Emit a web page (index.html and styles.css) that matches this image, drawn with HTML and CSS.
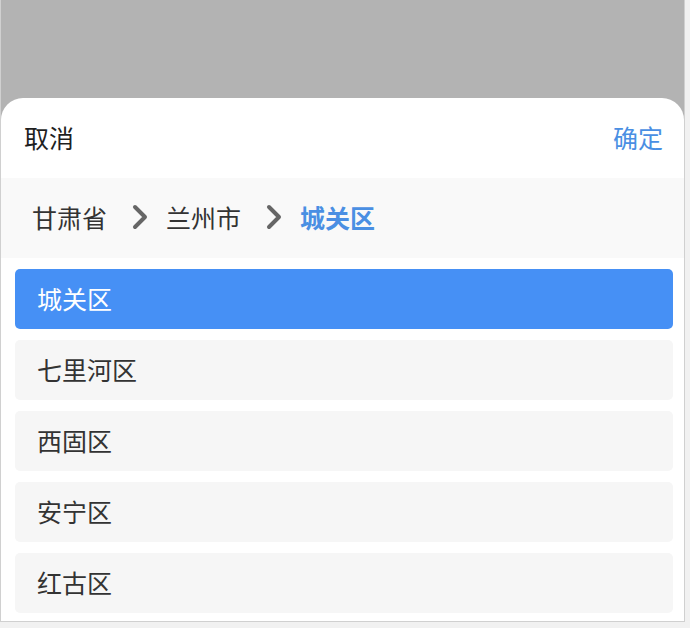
FILE: index.html
```html
<!DOCTYPE html>
<html>
<head>
  <title>地区选择</title>
  <meta name="viewport" content="width=device-width, initial-scale=1.0">
  <link rel="stylesheet" href="styles.css">
</head>
<body>
  <div class="frame">
    <div class="mask"></div>
    <div class="sheet">
      <div class="sheet-header">
        <span class="cancel">取消</span>
        <span class="confirm">确定</span>
      </div>

      <div class="crumbs">
        <span class="crumb">甘肃省</span>
        <svg class="arrow" width="16" height="26" viewBox="0 0 16 26"><path d="M3 3 L13 13 L3 23" /></svg>
        <span class="crumb">兰州市</span>
        <svg class="arrow" width="16" height="26" viewBox="0 0 16 26"><path d="M3 3 L13 13 L3 23" /></svg>
        <span class="crumb crumb-active">城关区</span>
      </div>

      <ul class="area-list">
        <li class="area-item selected">城关区</li>
        <li class="area-item">七里河区</li>
        <li class="area-item">西固区</li>
        <li class="area-item">安宁区</li>
        <li class="area-item">红古区</li>
      </ul>
    </div>
  </div>
</body>
</html>
```

FILE: styles.css
```css
    body {
      margin: 0;
      background-color: #f1f1f1;
      font-family: 'Noto Sans CJK SC', 'Noto Sans', sans-serif;
      color: #333333;
    }

    .frame {
      width: 683px;
      height: 621px;
      background-color: #b3b3b3;
      border: 1px solid #d0d0d0;
      border-top: none;
      display: flex;
      flex-direction: column;
    }

    .mask {
      height: 98px;
      flex-shrink: 0;
    }

    .sheet {
      flex: 1;
      background-color: #ffffff;
      border-radius: 22px 22px 0 0;
      display: flex;
      flex-direction: column;
    }

    .sheet-header {
      height: 80px;
      display: flex;
      justify-content: space-between;
      align-items: center;
      padding: 0 21px 3px 23px;
      box-sizing: border-box;
      font-size: 25px;
    }

    .cancel {
      color: #1f1f1f;
    }

    .confirm {
      color: #4a8fe3;
    }

    .crumbs {
      height: 80px;
      background-color: #f9f9f9;
      display: flex;
      align-items: center;
      padding-left: 31px;
      padding-bottom: 2px;
      box-sizing: border-box;
      font-size: 25px;
    }

    .crumb {
      color: #333333;
    }

    .crumb-active {
      color: #4a8fe3;
      font-weight: bold;
    }

    .arrow {
      margin: 0 18px 0 25px;
    }

    .arrow path {
      fill: none;
      stroke: #666666;
      stroke-width: 4;
      stroke-linecap: round;
      stroke-linejoin: round;
    }

    .area-list {
      list-style: none;
      margin: 0;
      padding: 11px 11px 0 14px;
      display: flex;
      flex-direction: column;
      gap: 11px;
    }

    .area-item {
      height: 60px;
      display: flex;
      align-items: center;
      padding-left: 22px;
      padding-bottom: 3px;
      box-sizing: border-box;
      background-color: #f6f6f6;
      border-radius: 5px;
      font-size: 25px;
      color: #333333;
    }

    .area-item.selected {
      background-color: #4690f5;
      color: #ffffff;
    }
```
